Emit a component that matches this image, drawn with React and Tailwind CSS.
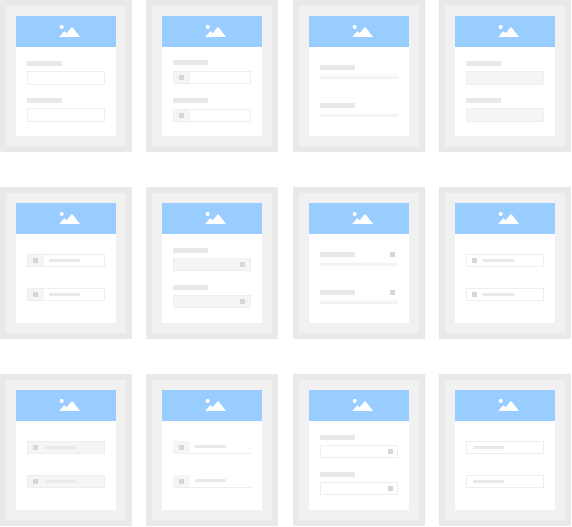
const CARDS = [
  { kind: "label", box: "h-[14px]", start: "pt-[14px]", gap: "gap-[13px]", inner: "gap-[5px]" },
  { kind: "label", box: "h-[13px]", start: "pt-[13px]", gap: "gap-[14px]", inner: "gap-[6px]", addon: true, icon: "ml-[5px]" },
  { kind: "line" },
  { kind: "label", box: "h-[14px]", start: "pt-[14px]", gap: "gap-[13px]", inner: "gap-[5px]", filled: true },
  { kind: "plain", addon: true, icon: "ml-[5px]", bar: "ml-[5px]" },
  { kind: "label", box: "h-[13px]", start: "pt-[14px]", gap: "gap-[14px]", inner: "gap-[5px]", filled: true, icon: "ml-[66px]" },
  { kind: "line", icon: true },
  { kind: "plain", icon: "ml-[5px]", bar: "ml-[6px]" },
  { kind: "plain", filled: true, icon: "ml-[5px]", bar: "ml-[7px]" },
  { kind: "underline" },
  { kind: "label", box: "h-[13px]", start: "pt-[14px]", gap: "gap-[14px]", inner: "gap-[5px]", icon: "ml-[67px]" },
  { kind: "plain", bar: "ml-[6px]" },
];

function Square({ className = "" }) {
  return <div className={`size-[5px] shrink-0 bg-[#d6d6d6] ${className}`} />;
}

function Label() {
  return <div className="h-[5px] w-[35px] bg-[#e8e8e8]" />;
}

function Bar({ className = "" }) {
  return <div className={`h-[3px] w-[31px] shrink-0 bg-[#e9e9e9] ${className}`} />;
}

function Input({ card, height }) {
  return (
    <div className={`flex w-full items-center border border-[#eeeeee] ${height} ${card.filled ? "bg-[#f5f5f5]" : "bg-white"}`}>
      {card.addon ? (
        <div className="flex h-full w-4 shrink-0 items-center bg-[#f5f5f5]">
          <Square className={card.icon} />
        </div>
      ) : (
        card.icon && <Square className={card.icon} />
      )}
      {card.bar && <Bar className={card.bar} />}
    </div>
  );
}

function LabelField({ card }) {
  return (
    <div className={`flex flex-col ${card.inner}`}>
      <Label />
      <Input card={card} height={card.box} />
    </div>
  );
}

function LineField({ icon }) {
  return (
    <div>
      <div className="flex justify-between pr-[3px]">
        <Label />
        {icon && <Square />}
      </div>
      <div className="mt-[3px] h-[3px] bg-[#fdfdfd]" />
      <div className="h-[3px] bg-[#f4f4f4]" />
    </div>
  );
}

function UnderlineField() {
  return (
    <div className="flex h-[13px] border-b border-[#eeeeee]">
      <div className="h-3 w-[17px] bg-[#f5f5f5] pt-1 pl-1.5">
        <Square />
      </div>
      <Bar className="mt-1 ml-[5px]" />
    </div>
  );
}

function Fields({ card }) {
  if (card.kind === "label") {
    return (
      <div className={`flex flex-col ${card.start} ${card.gap}`}>
        <LabelField card={card} />
        <LabelField card={card} />
      </div>
    );
  }
  if (card.kind === "line") {
    return (
      <div className="flex flex-col gap-6 pt-[18px]">
        <LineField icon={card.icon} />
        <LineField icon={card.icon} />
      </div>
    );
  }
  if (card.kind === "underline") {
    return (
      <div className="flex flex-col gap-[21px] pt-5">
        <UnderlineField />
        <UnderlineField />
      </div>
    );
  }
  return (
    <div className="flex flex-col gap-[21px] pt-5">
      <Input card={card} height="h-[13px]" />
      <Input card={card} height="h-[13px]" />
    </div>
  );
}

function Card({ card }) {
  return (
    <div className="h-[152px] w-[132px] border-[6px] border-[#e9e9e9] bg-[#f1f1f1] p-2.5">
      <div className="h-[120px] w-[100px] bg-white">
        <div className="h-[31px] bg-[#99ccff] pt-[9px] pl-[43px]">
          <svg width="22" height="12" viewBox="0 0 22 12" fill="#fff" className="block">
            <circle cx="2.7" cy="1.9" r="2" />
            <path d="M0.2 12 L4.7 6.7 Q5.4 5.9 6.1 6.7 L7.6 8.3 L12.1 2.8 Q13 1.7 13.9 2.8 L21.1 12 Z" />
          </svg>
        </div>
        <div className="px-[11px]">
          <Fields card={card} />
        </div>
      </div>
    </div>
  );
}

export default function App() {
  return (
    <main className="h-[527px] w-[572px] overflow-hidden bg-white">
      <div className="grid w-fit grid-cols-[146px_147px_146px_132px] gap-y-[35px]">
        {CARDS.map((card, i) => (
          <Card key={i} card={card} />
        ))}
      </div>
    </main>
  );
}
